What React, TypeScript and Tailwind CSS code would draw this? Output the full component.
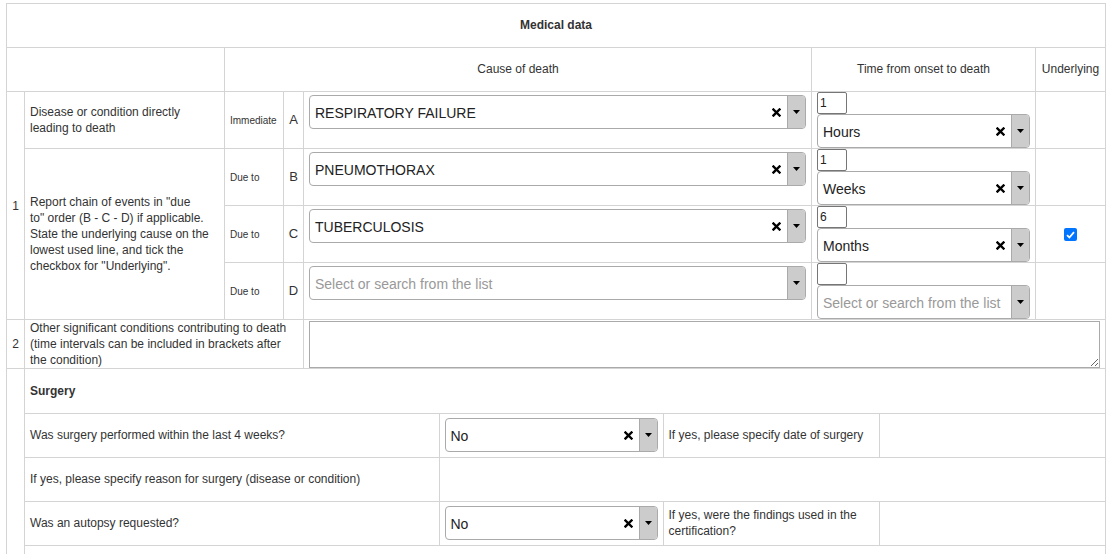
import React from 'react';

const cell = 'border border-[#d4d4d4]';

function ClearIcon() {
  return (
    <svg width="9" height="9" viewBox="0 0 9 9" className="mr-[6px] shrink-0">
      <path d="M1.5 1.5 L7.5 7.5 M7.5 1.5 L1.5 7.5" stroke="#000" strokeWidth="2.4" strokeLinecap="square" />
    </svg>
  );
}

function Select({ value, placeholder, clear = true }: { value?: string; placeholder?: string; clear?: boolean }) {
  return (
    <div className="flex h-[34px] w-full items-center overflow-hidden rounded-[4px] border border-[#aaa] bg-white">
      <span className={`mt-[2px] flex-1 truncate pl-[5px] text-[14px] ${value ? 'text-[#222]' : 'text-[#999]'}`}>
        {value || placeholder}
      </span>
      {clear && value && <ClearIcon />}
      <div className="flex h-full w-[18px] shrink-0 items-center justify-center border-l border-[#aaa] bg-[#ccc]">
        <svg width="7" height="4" viewBox="0 0 7 4">
          <path d="M0 0 L7 0 L3.5 4 Z" fill="#000" />
        </svg>
      </div>
    </div>
  );
}

function TimeCell({ num, unit }: { num?: string; unit?: string }) {
  return (
    <td className={`${cell} px-[5px] pt-0 pb-0 align-top`}>
      <div className="h-[22px] w-[30px] rounded-[2px] border border-[#767676] bg-white pl-[2px] text-[12px] leading-[20px] text-[#222]">
        {num}
      </div>
      <Select value={unit} placeholder="Select or search from the list" />
    </td>
  );
}

function CauseRow({ kind, letter, value, num, unit, underlying, children }: {
  kind: string; letter: string; value?: string; num?: string; unit?: string; underlying?: boolean; children?: React.ReactNode;
}) {
  return (
    <tr className="h-[57px]">
      {children}
      <td className={`${cell} px-[5px] text-[10px]`}>{kind}</td>
      <td className={`${cell} text-center text-[13px]`}>{letter}</td>
      <td className={`${cell} px-[5px] pt-[3px] align-top`}>
        <Select value={value} placeholder="Select or search from the list" />
      </td>
      <TimeCell num={num} unit={unit} />
      <td className={`${cell} text-center`}>
        {underlying && (
          <span className="inline-flex h-[13px] w-[13px] items-center justify-center rounded-[2px] bg-[#0075ff] align-middle">
            <svg width="9" height="8" viewBox="0 0 9 8">
              <path d="M1 4.2 L3.4 6.5 L8 1.2" stroke="#fff" strokeWidth="1.8" fill="none" />
            </svg>
          </span>
        )}
      </td>
    </tr>
  );
}

export default function App() {
  return (
    <div className="h-[554px] overflow-hidden bg-white pt-[3px] pl-[6px] font-['Liberation_Sans',Arial,sans-serif] text-[12px] text-[#333]">
      <table className="w-[1099px] table-fixed border-collapse">
        <colgroup>
          <col className="w-[18px]" />
          <col className="w-[200px]" />
          <col className="w-[59px]" />
          <col className="w-[20px]" />
          <col className="w-[508px]" />
          <col className="w-[224px]" />
          <col className="w-[70px]" />
        </colgroup>
        <tbody>
          <tr className="h-[44px]">
            <td colSpan={7} className={`${cell} pb-[2px] text-center font-bold`}>Medical data</td>
          </tr>
          <tr className="h-[44px]">
            <td colSpan={2} className={cell}></td>
            <td colSpan={3} className={`${cell} pb-[2px] text-center`}>Cause of death</td>
            <td className={`${cell} pb-[2px] text-center`}>Time from onset to death</td>
            <td className={`${cell} pb-[2px] text-center`}>Underlying</td>
          </tr>
          <CauseRow kind="Immediate" letter="A" value="RESPIRATORY FAILURE" num="1" unit="Hours">
            <td rowSpan={4} className={`${cell} text-center`}>1</td>
            <td className={`${cell} px-[5px] leading-[16px]`}>Disease or condition directly<br />leading to death</td>
          </CauseRow>
          <CauseRow kind="Due to" letter="B" value="PNEUMOTHORAX" num="1" unit="Weeks">
            <td rowSpan={3} className={`${cell} px-[5px] leading-[16px]`}>
              Report chain of events in "due<br />
              to" order (B - C - D) if applicable.<br />
              State the underlying cause on the<br />
              lowest used line, and tick the<br />
              checkbox for "Underlying".
            </td>
          </CauseRow>
          <CauseRow kind="Due to" letter="C" value="TUBERCULOSIS" num="6" unit="Months" underlying />
          <CauseRow kind="Due to" letter="D" />
          <tr className="h-[49px]">
            <td className={`${cell} text-center`}>2</td>
            <td colSpan={3} className={`${cell} px-[5px] leading-[16px]`}>
              Other significant conditions contributing to death (time intervals can be included in brackets after the condition)
            </td>
            <td colSpan={3} className={`${cell} px-[5px] py-0`}>
              <textarea className="block h-[47px] w-full resize-y border border-[#aaa] bg-white" />
            </td>
          </tr>
          <tr>
            <td rowSpan={2} className={cell}></td>
            <td colSpan={6} className={`${cell} p-0`}>
              <table className="w-full table-fixed border-collapse border-hidden">
                <colgroup>
                  <col className="w-[414px]" />
                  <col className="w-[224px]" />
                  <col className="w-[216px]" />
                  <col />
                </colgroup>
                <tbody>
                  <tr className="h-[44px]">
                    <td colSpan={4} className={`${cell} px-[5px] font-bold`}>Surgery</td>
                  </tr>
                  <tr className="h-[44px]">
                    <td className={`${cell} px-[5px]`}>Was surgery performed within the last 4 weeks?</td>
                    <td className={`${cell} px-[5px]`}><Select value="No" /></td>
                    <td className={`${cell} px-[5px] leading-[16px]`}>If yes, please specify date of surgery</td>
                    <td className={cell}></td>
                  </tr>
                  <tr className="h-[44px]">
                    <td className={`${cell} px-[5px]`}>If yes, please specify reason for surgery (disease or condition)</td>
                    <td colSpan={3} className={cell}></td>
                  </tr>
                  <tr className="h-[44px]">
                    <td className={`${cell} px-[5px]`}>Was an autopsy requested?</td>
                    <td className={`${cell} px-[5px]`}><Select value="No" /></td>
                    <td className={`${cell} px-[5px] leading-[16px]`}>If yes, were the findings used in the certification?</td>
                    <td className={cell}></td>
                  </tr>
                  <tr className="h-[44px]">
                    <td colSpan={4} className={`${cell} px-[5px]`}></td>
                  </tr>
                </tbody>
              </table>
            </td>
          </tr>
        </tbody>
      </table>
    </div>
  );
}
